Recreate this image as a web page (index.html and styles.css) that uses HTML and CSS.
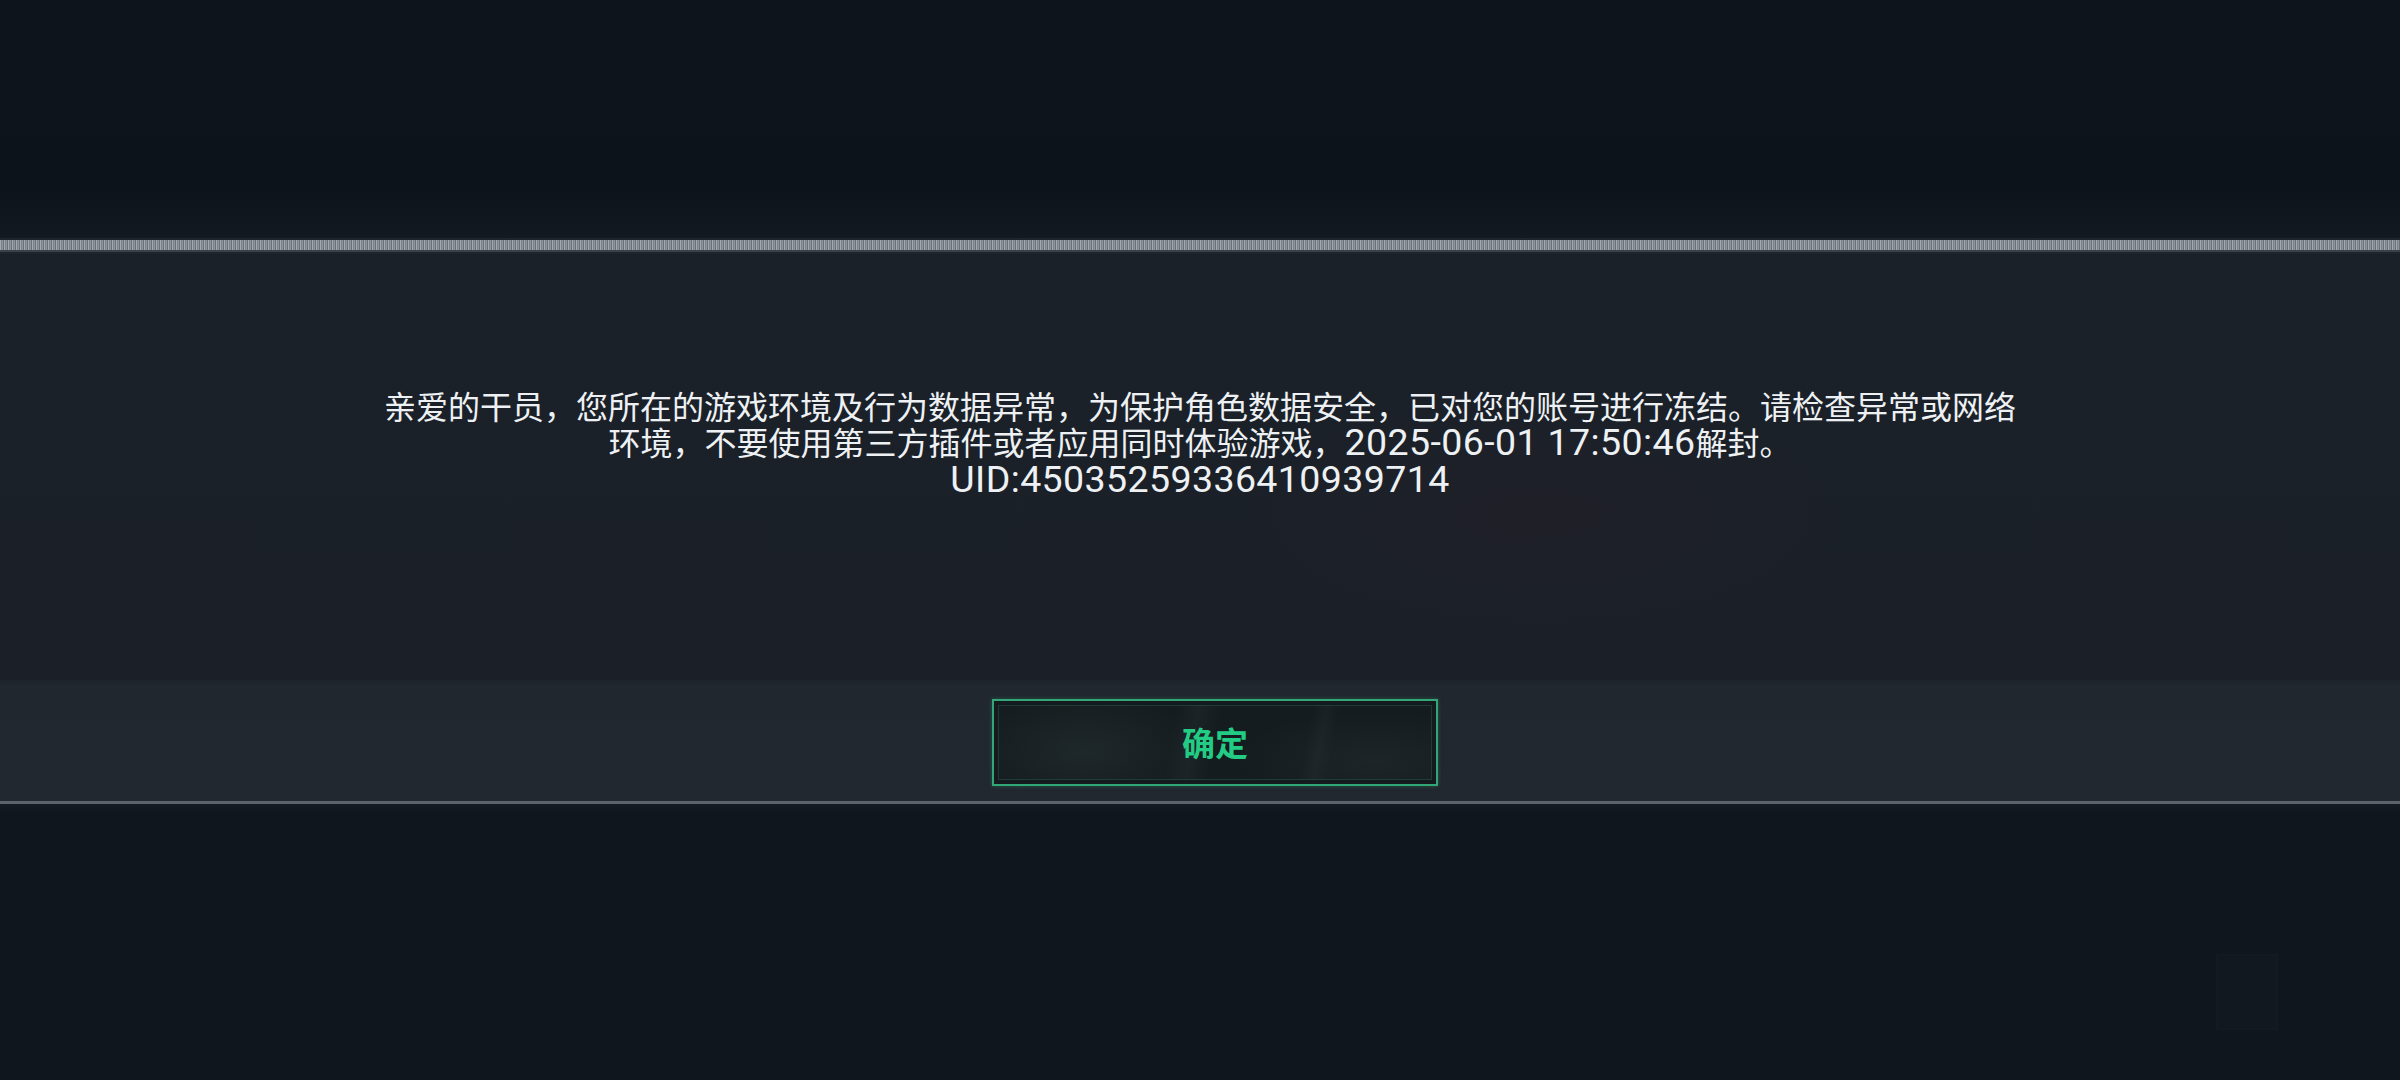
FILE: index.html
```html
<!DOCTYPE html>
<html lang="zh-CN">
<head>
<meta charset="utf-8">
<title>账号冻结</title>
<link rel="stylesheet" href="styles.css">
</head>
<body>
<div class="screen">
  <div class="top"></div>
  <div class="rail"></div>
  <div class="panel">
    <div class="msg">
      <p class="line">亲爱的干员，您所在的游戏环境及行为数据异常，为保护角色数据安全，已对您的账号进行冻结。请检查异常或网络</p>
      <p class="line">环境，不要使用第三方插件或者应用同时体验游戏，<span class="num">2025-06-01 17:50:46</span>解封。</p>
      <p class="line"><span class="num">UID:45035259336410939714</span></p>
    </div>
  </div>
  <div class="footer">
    <button class="confirm" type="button">确定</button>
  </div>
  <div class="bottom">
    <div class="ghost"></div>
  </div>
</div>
</body>
</html>
```
FILE: styles.css
```css
html, body {
  margin: 0;
  padding: 0;
  width: 2400px;
  height: 1080px;
  overflow: hidden;
  background: #0f151c;
}

.screen {
  width: 2400px;
  height: 1080px;
  display: flex;
  flex-direction: column;
  font-family: "Noto Sans CJK SC", "Noto Sans", sans-serif;
}

.top {
  height: 238px;
  flex: none;
  background: linear-gradient(180deg, #0e141b 0%, #0d131a 80%, #121921 100%);
}

.rail {
  height: 16px;
  flex: none;
  background:
    linear-gradient(180deg, #1c242d 0 2px, transparent 2px 12px, #3a4149 12px 14px, #1e252c 14px 16px),
    repeating-linear-gradient(90deg, #a3a9b0 0 1px, #7b8189 1px 2px, #8e949b 2px 3px, #6a7078 3px 4px);
}

.panel {
  height: 426px;
  flex: none;
  background:
    radial-gradient(ellipse 300px 120px at 1540px 260px, rgba(60, 30, 35, 0.12), transparent),
    linear-gradient(180deg, #1b2129 0%, #1b2028 100%);
  display: flex;
  justify-content: center;
}

.msg {
  padding-top: 133px;
  text-align: center;
  color: #eef1f4;
  font-size: 32px;
  line-height: 36px;
}

.line {
  margin: 0;
  white-space: nowrap;
}

.num {
  font-family: "Roboto", "Noto Sans", sans-serif;
  font-size: 37.5px;
  letter-spacing: 0.4px;
  line-height: 36px;
}

.footer {
  height: 121px;
  flex: none;
  background: linear-gradient(180deg, #1d232a 0, #21272e 6px, #22282f 100%);
  display: flex;
  justify-content: center;
  align-items: flex-start;
  padding-top: 19px;
  box-sizing: border-box;
}

.confirm {
  width: 446px;
  height: 87px;
  margin-left: 30px;
  border: 2px solid #32a677;
  background:
    radial-gradient(ellipse 120px 60px at 90px 50px, rgba(70, 90, 90, 0.18), transparent),
    radial-gradient(ellipse 140px 50px at 380px 60px, rgba(70, 90, 90, 0.14), transparent),
    linear-gradient(100deg, transparent 40%, rgba(80, 100, 110, 0.10) 45%, transparent 50%, transparent 70%, rgba(80, 100, 110, 0.08) 73%, transparent 76%),
    #151c1f;
  box-shadow:
    inset 0 0 0 4px #141a1d,
    inset 0 0 0 5px rgba(44, 120, 88, 0.35),
    0 0 4px rgba(40, 180, 120, 0.35);
  color: #22cc84;
  font-family: "Noto Sans CJK SC", sans-serif;
  font-weight: 700;
  font-size: 33px;
  line-height: 1;
  padding: 0;
  cursor: pointer;
}

.bottom {
  flex: 1;
  position: relative;
  border-top: 3px solid #5d636b;
  background: linear-gradient(180deg, #151b22 0, #10161d 10px, #10161d 100%);
}

.ghost {
  position: absolute;
  left: 2216px;
  top: 150px;
  width: 58px;
  height: 72px;
  border: 2px solid #131a21;
  background: #11181f;
}
```
